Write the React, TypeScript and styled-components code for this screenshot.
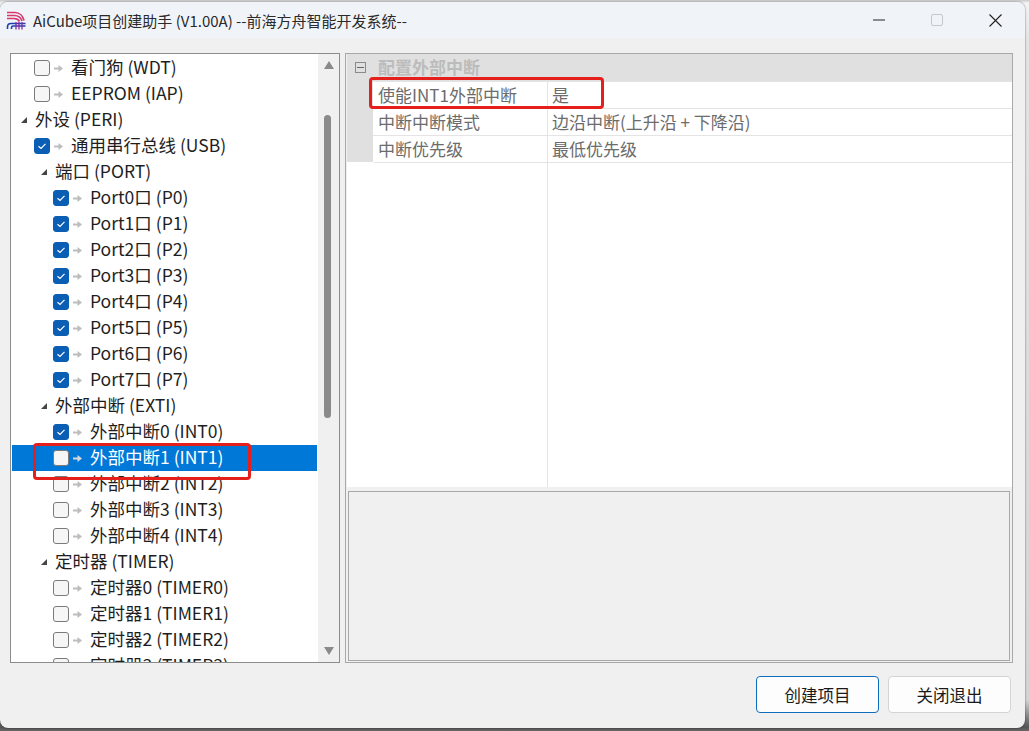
import React from "react";
import styled, { createGlobalStyle } from "styled-components";

const GlobalStyle = createGlobalStyle`
  html, body {
    margin: 0;
    padding: 0;
    width: 1029px;
    height: 731px;
    overflow: hidden;
    background: #cfcfcf;
    font-family: "Noto Sans CJK SC", "Noto Sans", sans-serif;
  }
`;

const Desktop = styled.div`
  width: 1029px;
  height: 731px;
  padding: 2px 4px 3px 0;
  box-sizing: border-box;
  background: linear-gradient(#c8c8c8 0, #f4f4f4 3px, #e4e4e4 40px, #d4d4d4 700px, #555 727px, #666 731px);
`;

const Window = styled.div`
  width: 100%;
  height: 100%;
  display: flex;
  flex-direction: column;
  background: #f0f0f0;
  border-radius: 8px;
  overflow: hidden;
  box-shadow: 0 0 2px rgba(0, 0, 0, 0.6);
`;

const TitleBar = styled.div`
  height: 36px;
  flex: none;
  display: flex;
  align-items: center;
  padding-left: 6px;
  background: #f0f4f9;
`;

const Title = styled.div`
  margin-left: 7px;
  font-size: 15px;
  color: #2a2a2a;
  white-space: nowrap;
`;

const WindowButtons = styled.div`
  margin-left: auto;
  display: flex;
  height: 100%;
  padding-right: 1px;
`;

const WindowButton = styled.div`
  width: 58px;
  display: flex;
  align-items: center;
  justify-content: center;
`;

const Body = styled.div`
  flex: 1;
  display: flex;
  flex-direction: column;
  padding: 15px 12px 15px 10px;
  min-height: 0;
`;

const Panels = styled.div`
  height: 610px;
  flex: none;
  display: flex;
  gap: 5px;
`;

const TreePanel = styled.div`
  position: relative;
  width: 330px;
  flex: none;
  display: flex;
  box-sizing: border-box;
  border: 1px solid #8c8c8c;
  background: #fff;
`;

const TreeList = styled.div`
  flex: 1;
  overflow: hidden;
  padding-top: 1px;
  margin: 0 1px;
`;

const Row = styled.div<{ $level: number; $selected?: boolean }>`
  height: 26px;
  display: flex;
  align-items: center;
  box-sizing: border-box;
  padding-left: ${(p) => p.$level}px;
  font-size: 17.5px;
  line-height: 24px;
  white-space: nowrap;
  color: ${(p) => (p.$selected ? "#fff" : "#1e1e1e")};
  background: ${(p) => (p.$selected ? "#0078d7" : "transparent")};
`;

const RowLabel = styled.span`
  position: relative;
  top: -1px;
`;

const Expander = styled.span`
  width: 0;
  height: 0;
  flex: none;
  margin-right: 8px;
  border-left: 6px solid transparent;
  border-bottom: 6px solid #444;
`;

const CheckBox = styled.span<{ $checked?: boolean }>`
  width: 16px;
  height: 16px;
  flex: none;
  display: flex;
  align-items: center;
  justify-content: center;
  border-radius: 3px;
  box-sizing: border-box;
  border: 1px solid ${(p) => (p.$checked ? "#0a5fb4" : "#7a7a7a")};
  background: ${(p) => (p.$checked ? "#0a5fb4" : "#f6f6f6")};
`;

const NodeArrow = styled.svg`
  width: 9px;
  height: 9px;
  flex: none;
  margin: 0 8px 0 4px;
`;

const ScrollBar = styled.div`
  width: 21px;
  flex: none;
  position: relative;
  display: flex;
  flex-direction: column;
  align-items: center;
  justify-content: space-between;
  padding: 7px 0 7px;
  box-sizing: border-box;
  background: #f0f0f0;
`;

const ScrollThumb = styled.div`
  position: absolute;
  top: 61px;
  left: 6px;
  width: 7px;
  height: 303px;
  border-radius: 4px;
  background: #8a8a8a;
`;

const ScrollArrow = styled.span<{ $down?: boolean }>`
  width: 0;
  height: 0;
  border-left: 5px solid transparent;
  border-right: 5px solid transparent;
  ${(p) => (p.$down ? "border-top: 8px solid #8a8a8a;" : "border-bottom: 8px solid #8a8a8a;")}
`;

const RedBox = styled.div<{ $left: number; $top: number; $width: number; $height: number }>`
  position: absolute;
  left: ${(p) => p.$left}px;
  top: ${(p) => p.$top}px;
  width: ${(p) => p.$width}px;
  height: ${(p) => p.$height}px;
  box-sizing: border-box;
  border: 3px solid #e5201c;
  border-radius: 4px;
`;

const RightPanel = styled.div`
  position: relative;
  flex: 1;
  display: flex;
  flex-direction: column;
  box-sizing: border-box;
  border: 1px solid #a8a8a8;
  padding: 0 0 1px 1px;
`;

const PropertyGrid = styled.div`
  height: 433px;
  flex: none;
  display: flex;
  flex-direction: column;
  background: #fff;
`;

const GroupRow = styled.div`
  height: 27px;
  flex: none;
  box-sizing: border-box;
  padding-bottom: 2px;
  display: flex;
  align-items: center;
  background: #e0e0e0;
  font-size: 17px;
  font-weight: 700;
  color: #bcbcbc;
`;

const Toggle = styled.span`
  width: 11px;
  height: 11px;
  flex: none;
  margin: 2px 12px 0 8px;
  box-sizing: border-box;
  border: 1px solid #8a8a8a;
  display: flex;
  align-items: center;
  justify-content: center;
  &::after {
    content: "";
    width: 7px;
    height: 1px;
    background: #666;
  }
`;

const PropertyRow = styled.div`
  height: 27px;
  flex: none;
  display: flex;
  font-size: 17px;
  color: #6c6c6c;
`;

const Gutter = styled.div`
  width: 26px;
  flex: none;
  background: #e0e0e0;
`;

const NameCell = styled.div`
  width: 175px;
  flex: none;
  box-sizing: border-box;
  padding: 0 0 2px 5px;
  display: flex;
  align-items: center;
  border-top: 1px solid #e4e4e4;
  border-right: 1px solid #e4e4e4;
`;

const ValueCell = styled.div`
  flex: 1;
  padding: 0 0 2px 4px;
  display: flex;
  align-items: center;
  border-top: 1px solid #e4e4e4;
`;

const GridRest = styled.div`
  flex: 1;
  margin-left: 200px;
  border-left: 1px solid #e4e4e4;
  position: relative;
  &::before {
    content: "";
    position: absolute;
    top: 0;
    left: -174px;
    right: 0;
    height: 1px;
    background: #e4e4e4;
  }
`;

const Description = styled.div`
  flex: 1;
  margin: 4px 2px 0 1px;
  border: 1px solid #a8a8a8;
  background: #f0f0f0;
`;

const Footer = styled.div`
  flex: 1;
  display: flex;
  align-items: flex-end;
  justify-content: flex-end;
  gap: 9px;
  padding-right: 2px;
`;

const Button = styled.button<{ $primary?: boolean }>`
  width: 123px;
  height: 37px;
  padding: 0;
  border-radius: 4px;
  font-family: inherit;
  font-size: 16.5px;
  color: #1a1a1a;
  background: #fdfdfd;
  border: 1px solid ${(p) => (p.$primary ? "#0f6cbd" : "#d4d4d4")};
`;

type Node = {
  label: string;
  level: number;
  kind: "group" | "check";
  checked?: boolean;
  selected?: boolean;
};

const NODES: Node[] = [
  { label: "看门狗 (WDT)", level: 22, kind: "check" },
  { label: "EEPROM (IAP)", level: 22, kind: "check" },
  { label: "外设 (PERI)", level: 9, kind: "group" },
  { label: "通用串行总线 (USB)", level: 22, kind: "check", checked: true },
  { label: "端口 (PORT)", level: 29, kind: "group" },
  ...[0, 1, 2, 3, 4, 5, 6, 7].map(
    (i): Node => ({ label: `Port${i}口 (P${i})`, level: 41, kind: "check", checked: true })
  ),
  { label: "外部中断 (EXTI)", level: 29, kind: "group" },
  { label: "外部中断0 (INT0)", level: 41, kind: "check", checked: true },
  { label: "外部中断1 (INT1)", level: 41, kind: "check", selected: true },
  { label: "外部中断2 (INT2)", level: 41, kind: "check" },
  { label: "外部中断3 (INT3)", level: 41, kind: "check" },
  { label: "外部中断4 (INT4)", level: 41, kind: "check" },
  { label: "定时器 (TIMER)", level: 29, kind: "group" },
  { label: "定时器0 (TIMER0)", level: 41, kind: "check" },
  { label: "定时器1 (TIMER1)", level: 41, kind: "check" },
  { label: "定时器2 (TIMER2)", level: 41, kind: "check" },
  { label: "定时器3 (TIMER3)", level: 41, kind: "check" }
];

const PROPERTIES = [
  ["使能INT1外部中断", "是"],
  ["中断中断模式", "边沿中断(上升沿 + 下降沿)"],
  ["中断优先级", "最低优先级"]
];

const Logo = () => (
  <svg width="20" height="20" viewBox="0 0 20 20" fill="none">
    <path d="M1 2.500h8c4.500 0 8 3.500 9 8M1 5.500h7.500c3.500 0 6.500 2.500 7.500 5.500M1 8.500h7c2.500 0 4.500 1 5.500 3" stroke="#d8386e" strokeWidth="1.700" />
    <path d="M1.500 19v-2c0-2 1.500-3.500 3.500-3.500h14.500M5.500 19v-1.500c0-1 .5-1.500 1.500-1.500h12.500" stroke="#1f3fb0" strokeWidth="1.600" />
    <path d="M10 12v7.500M13 12v7.500M16 12v7.500" stroke="#8a2aa0" strokeWidth="1.300" />
  </svg>
);

const TreeRow = ({ node }: { node: Node }) => (
  <Row $level={node.level} $selected={node.selected}>
    {node.kind === "group" ? (
      <Expander />
    ) : (
      <>
        <CheckBox $checked={node.checked}>
          {node.checked && (
            <svg width="10" height="10" viewBox="0 0 10 10" fill="none">
              <path d="M1.500 5.200 4 7.500 8.500 2.800" stroke="#fff" strokeWidth="1.200" />
            </svg>
          )}
        </CheckBox>
        <NodeArrow viewBox="0 0 9 9">
          <path d="M0 3.500h4.500V1L9 4.500 4.500 8V5.500H0z" fill={node.selected ? "#d8d8d8" : "#bdbdbd"} />
        </NodeArrow>
      </>
    )}
    <RowLabel>{node.label}</RowLabel>
  </Row>
);

export default function App() {
  return (
    <Desktop>
      <GlobalStyle />
      <Window>
        <TitleBar>
          <Logo />
          <Title>AiCube项目创建助手 (V1.00A) --前海方舟智能开发系统--</Title>
          <WindowButtons>
            <WindowButton>
              <svg width="12" height="12" viewBox="0 0 12 12">
                <path d="M0 6h12" stroke="#222" strokeWidth="1" />
              </svg>
            </WindowButton>
            <WindowButton>
              <svg width="12" height="12" viewBox="0 0 12 12" fill="none">
                <rect x="0.500" y="0.500" width="11" height="11" rx="1.500" stroke="#c4c8cc" />
              </svg>
            </WindowButton>
            <WindowButton>
              <svg width="13" height="13" viewBox="0 0 13 13">
                <path d="M.5.500l12 12M12.500.500l-12 12" stroke="#222" strokeWidth="1.100" />
              </svg>
            </WindowButton>
          </WindowButtons>
        </TitleBar>
        <Body>
          <Panels>
            <TreePanel>
              <TreeList>
                {NODES.map((node) => (
                  <TreeRow key={node.label} node={node} />
                ))}
              </TreeList>
              <ScrollBar>
                <ScrollArrow />
                <ScrollThumb />
                <ScrollArrow $down />
              </ScrollBar>
              <RedBox $left={22} $top={389} $width={218} $height={37} />
            </TreePanel>
            <RightPanel>
              <PropertyGrid>
                <GroupRow>
                  <Toggle />
                  配置外部中断
                </GroupRow>
                {PROPERTIES.map(([name, value]) => (
                  <PropertyRow key={name}>
                    <Gutter />
                    <NameCell>{name}</NameCell>
                    <ValueCell>{value}</ValueCell>
                  </PropertyRow>
                ))}
                <GridRest />
              </PropertyGrid>
              <Description />
              <RedBox $left={23} $top={23} $width={235} $height={32} />
            </RightPanel>
          </Panels>
          <Footer>
            <Button $primary>创建项目</Button>
            <Button>关闭退出</Button>
          </Footer>
        </Body>
      </Window>
    </Desktop>
  );
}
